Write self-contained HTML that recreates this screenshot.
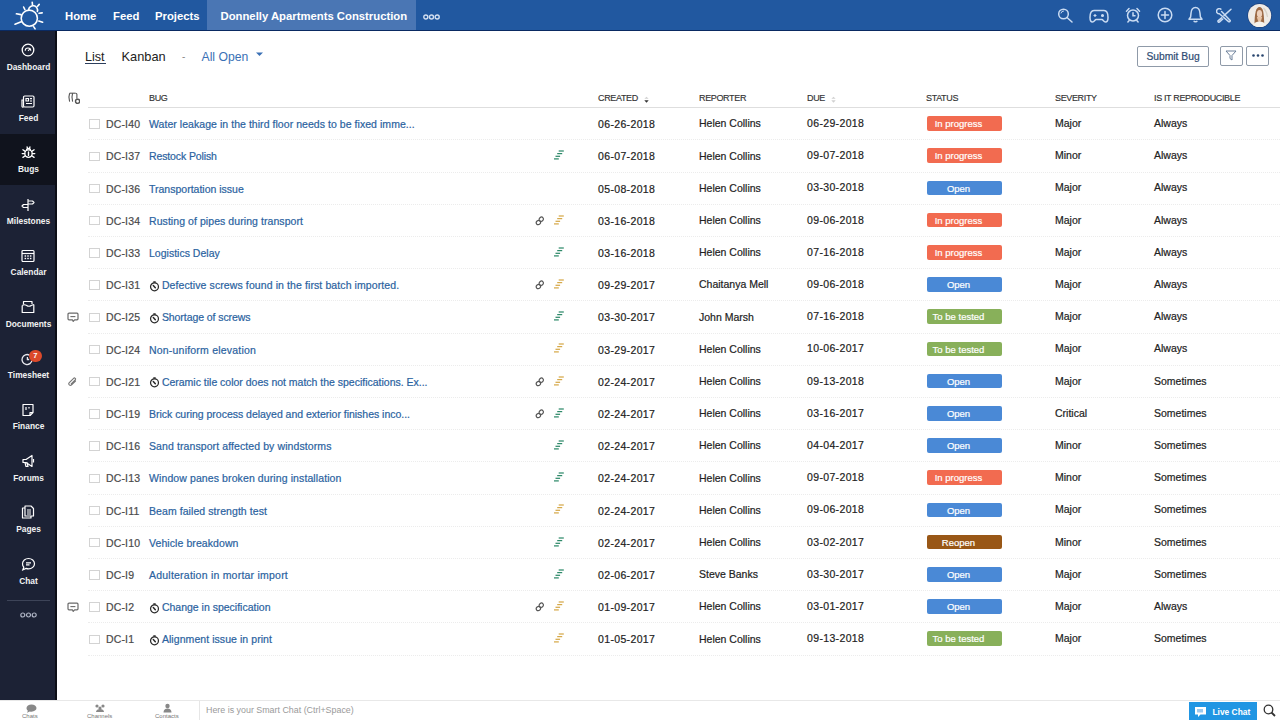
<!DOCTYPE html>
<html><head><meta charset="utf-8">
<style>
*{margin:0;padding:0;box-sizing:border-box}
html,body{width:1280px;height:720px;overflow:hidden;background:#fff;font-family:"Liberation Sans",sans-serif;color:#222}
.abs{position:absolute}
#top{position:absolute;left:0;top:0;width:1280px;height:31px;background:#2158a0;border-bottom:1.3px solid #0a2a62}
#top .nav{position:absolute;top:1px;height:30px;line-height:31px;font-size:11.3px;font-weight:bold;color:#fff;white-space:nowrap}
#acttab{position:absolute;left:207px;top:0;width:209px;height:30px;background:#4a76b4}
#side{position:absolute;left:0;top:31px;width:57px;height:669px;background:#1c2235;border-right:2px solid #0c0e16}
.si{position:absolute;left:0;width:55px;height:51.5px}
.si.act{background:#10131d;height:51px}
.si .lbl{position:absolute;left:0;width:57px;text-align:center;top:30.5px;font-size:8.4px;font-weight:bold;color:#f2f2f2;line-height:10px;white-space:nowrap}
.si svg{position:absolute;left:20px;top:10px}
#bottom{position:absolute;left:0;top:700px;width:1280px;height:20px;background:#fff;border-top:1px solid #e8e8e8}
.row{position:absolute;left:88px;width:1192px;height:32.25px;border-bottom:1px dotted #ececec}
.row > div{position:absolute;top:1px;height:31px;line-height:31px;white-space:nowrap;font-size:10.5px;-webkit-text-stroke:0.2px currentColor}
.cb{left:1.2px!important;top:11.2px!important;width:11px;height:9.5px!important;border:1px solid #d3d3d3;background:#fff}
.id{left:18px;color:#4a4a4a;letter-spacing:0.15px}
.ttl{left:61px;color:#2a62a0}
.ttl.t2{left:73.9px}
.row > .clkw{left:60.9px;top:10.6px;height:12px;line-height:0}
.lnkw{left:447px}
.lnkw svg{position:relative;top:1px}
.row > .priw{left:465px;top:9.8px;height:10px;line-height:0}
.c{color:#222}
.cr{left:510px;letter-spacing:0.35px}
.row > .rep{left:611px;top:0.2px}
.row > .due{left:719px;letter-spacing:0.35px;top:-0.2px}
.badge{left:839px!important;top:8px!important;width:75px;height:14.5px!important;line-height:16px!important;border-radius:2px;color:#fff;font-size:9.5px!important;-webkit-text-stroke:0.2px #fff;text-align:center;padding-right:12px}
.row > .sev{left:967px;top:-0.2px}
.row > .repro{left:1066px;top:-0.2px}
.lefti{left:-21px!important}
.lefti svg{position:relative;top:2px}
.th{position:absolute;top:92px;font-size:9px;color:#333;-webkit-text-stroke:0.15px #333;letter-spacing:-0.35px;line-height:12px;white-space:nowrap}
</style></head>
<body>
<div id="top">
  <svg class="abs" style="left:0px;top:0px" width="50" height="31" viewBox="0 0 50 31">
    <g fill="none" stroke="#fff" stroke-width="1.6" stroke-linecap="round">
      <circle cx="29.3" cy="18.2" r="8.1"/>
      <path d="M28.6 9.6A4.5 4.5 0 1 1 37.4 11.4"/>
      <path d="M32.2 2.2l.3 2.6M39.2 4.4l-1.6 1.8M23.6 7l1.3 2.6M16.4 13.8l4.5 0.8M42.2 12.9l-3.1 0.4M15 24.2l6.2-2.4M42.6 22.2l-3.8-1.2M35.1 28.9l-1.3-2.1"/>
    </g>
  </svg>
  <div id="acttab"></div>
  <div class="nav" style="left:65px">Home</div>
  <div class="nav" style="left:113px">Feed</div>
  <div class="nav" style="left:155px">Projects</div>
  <div class="nav" style="left:220.5px">Donnelly Apartments Construction</div>
  <svg class="abs" style="left:423px;top:14.2px" width="17" height="6" viewBox="0 0 17 6"><g fill="none" stroke="#d2def0" stroke-width="1.4"><circle cx="2.8" cy="3" r="2"/><circle cx="8.5" cy="3" r="2"/><circle cx="14.2" cy="3" r="2"/></g></svg>
  <!-- right icons -->
  <svg class="abs" style="left:1057px;top:8px" width="17" height="15" viewBox="0 0 17 15"><g fill="none" stroke="#c9dbf2" stroke-width="1.5" stroke-linecap="round"><circle cx="6.5" cy="6" r="4.8"/><path d="M10 9.5l5 4.5"/><path d="M4 5a2.5 2.5 0 0 1 2.5-2" stroke-width="1"/></g></svg>
  <svg class="abs" style="left:1089px;top:9px" width="20" height="14" viewBox="0 0 20 14"><g fill="none" stroke="#c9dbf2" stroke-width="1.5" stroke-linejoin="round"><path d="M5 1.5h10c2.5 0 4 3 4 7 0 3-1 4.5-2.5 4.5-1.8 0-2.5-2.5-3.5-2.5H7c-1 0-1.7 2.5-3.5 2.5C2 13 1 11.5 1 8.5c0-4 1.5-7 4-7z"/><path d="M4.5 6.5h3M6 5v3" stroke-width="1.2"/><circle cx="13.5" cy="6.5" r="0.8" fill="#c9dbf2"/></g></svg>
  <svg class="abs" style="left:1125px;top:7px" width="16" height="16" viewBox="0 0 16 16"><g fill="none" stroke="#c9dbf2" stroke-width="1.5" stroke-linecap="round"><circle cx="8" cy="8.5" r="5.5"/><path d="M8 5.8v3h2"/><path d="M1.5 4.2l2.5-2.6M14.5 4.2L12 1.6M4.2 13.5l-1.3 1.5M11.8 13.5l1.3 1.5"/></g></svg>
  <svg class="abs" style="left:1157px;top:7px" width="16" height="16" viewBox="0 0 16 16"><g fill="none" stroke="#c9dbf2" stroke-width="1.5" stroke-linecap="round"><circle cx="8" cy="8" r="6.8"/><path d="M8 4.5v7M4.5 8h7"/></g></svg>
  <svg class="abs" style="left:1188px;top:6px" width="15" height="17" viewBox="0 0 15 17"><g fill="none" stroke="#c9dbf2" stroke-width="1.5" stroke-linejoin="round"><path d="M7.5 1.5c-3 0-4.3 2.8-4.5 5.8L2.6 11 1 13.2h13L12.4 11 12 7.3C11.8 4.3 10.5 1.5 7.5 1.5z"/><path d="M5.8 14.8a1.8 1.6 0 0 0 3.4 0"/></g></svg>
  <svg class="abs" style="left:1216px;top:8px" width="17" height="15" viewBox="0 0 17 15"><g fill="none" stroke="#c9dbf2" stroke-width="1.5" stroke-linecap="round" stroke-linejoin="round"><path d="M4.8 1.2A2.6 2.6 0 1 0 3.4 5.8L12.6 13.6a1 1 0 0 0 1.4-1.4L5.6 3.6"/><path d="M15 1.2L8 7.6"/><path d="M5.6 9.8L2 12.8a1 1 0 0 0 1.3 1.3L6.8 11"/></g></svg>
  <svg class="abs" style="left:1247px;top:3px" width="25" height="25" viewBox="0 0 25 25">
    <defs><clipPath id="av"><circle cx="12.6" cy="12.5" r="11.6"/></clipPath></defs>
    <circle cx="12.6" cy="12.5" r="12.2" fill="#1d3f78"/>
    <circle cx="12.6" cy="12.5" r="11.6" fill="#efebe6"/>
    <g clip-path="url(#av)">
      <path d="M7.5 22c0-5 .3-10 1.2-13.5.8-3 2-4.5 3.8-4.5s3 1.5 3.7 4.5c.7 3.5 1 8.5 1 13.5z" fill="#9c6a45"/>
      <ellipse cx="12.5" cy="10.8" rx="2.6" ry="3.8" fill="#edd0bb"/><path d="M9.8 14c.8 3 1.6 5 2.7 5s1.9-2 2.7-5z" fill="#e7c4a6"/>
      <path d="M5 25c.5-4 3.5-6.5 7.5-6.5s7 2.5 7.5 6.5z" fill="#f5f2ec"/>
      <path d="M16.5 5c2 2 3.5 5 4 9" stroke="#d8d2c8" stroke-width="1.2" fill="none"/>
    </g>
  </svg>
</div>

<div id="side">
  <div class="si" style="top:0.0px">
    <svg style="left:21px;top:11.8px" width="14" height="14" viewBox="0 0 14 14"><g fill="none" stroke="#fff" stroke-width="1.3"><circle cx="7" cy="7" r="5.8"/><path d="M4.2 7.8a2.8 2.8 0 0 1 5.6 0" stroke-width="1.1"/><path d="M7 7.8l2.2-2.2" stroke-width="1.1"/></g></svg>
    <div class="lbl">Dashboard</div>
  </div>
  <div class="si" style="top:51.4px">
    <svg style="left:21px;top:12.8px" width="14" height="13" viewBox="0 0 14 13"><g fill="none" stroke="#fff" stroke-width="1.2"><rect x="2.5" y="1" width="10.5" height="11" rx="1.2"/><path d="M2.5 5H1v6a1 1 0 0 0 1.5 1"/><path d="M5 3.5h2.5v2.5H5zM9 3.6h2M9 6h2M5 8.5h6"/></g></svg>
    <div class="lbl">Feed</div>
  </div>
  <div class="si act" style="top:102.8px">
    <svg style="left:21px;top:11.8px" width="15" height="14" viewBox="0 0 15 14"><g fill="none" stroke="#fff" stroke-width="1.3" stroke-linecap="round"><circle cx="7.5" cy="7.6" r="3.7"/><path d="M5.6 3.6a2 1.6 0 0 1 3.8 0"/><path d="M6.1 1l.5 1.8M8.9 1l-.5 1.8M1.2 7.6h2.5M11.3 7.6h2.5M1.9 3.8l2.4 1.6M13.1 3.8l-2.4 1.6M1.9 11.4l2.4-1.6M13.1 11.4l-2.4-1.6"/><path d="M7.5 6v3.4" stroke-width="1.4"/></g></svg>
    <div class="lbl">Bugs</div>
  </div>
  <div class="si" style="top:154.2px">
    <svg style="left:21px;top:12.8px" width="14" height="14" viewBox="0 0 14 14"><g fill="none" stroke="#fff" stroke-width="1.2" stroke-linejoin="round"><path d="M7 1v12"/><path d="M7 3h4.5l1.5 1.5L11.5 6H7"/><path d="M7 6.5H2.5L1 8l1.5 1.5H7"/></g></svg>
    <div class="lbl">Milestones</div>
  </div>
  <div class="si" style="top:205.6px">
    <svg style="left:21px;top:12.8px" width="14" height="14" viewBox="0 0 14 14"><g fill="none" stroke="#fff" stroke-width="1.2"><rect x="1" y="1.5" width="12" height="11" rx="1"/><path d="M1 4.5h12"/></g><g fill="#fff"><rect x="3.6" y="6.3" width="1.5" height="1.4"/><rect x="6.25" y="6.3" width="1.5" height="1.4"/><rect x="8.9" y="6.3" width="1.5" height="1.4"/><rect x="3.6" y="8.8" width="1.5" height="1.4"/><rect x="6.25" y="8.8" width="1.5" height="1.4"/><rect x="8.9" y="8.8" width="1.5" height="1.4"/></g></svg>
    <div class="lbl">Calendar</div>
  </div>
  <div class="si" style="top:257.0px">
    <svg style="left:21px;top:11.8px" width="14" height="14" viewBox="0 0 14 14"><g fill="none" stroke="#fff" stroke-width="1.2" stroke-linejoin="round"><path d="M1.2 5.5v7h11.6V4.5"/><path d="M1.2 5.5c1.5-1 3-1 4.5 0s3 1 4.5 0l2.6-1"/><path d="M2.5 4.6V1.5h8.5v2.6"/></g></svg>
    <div class="lbl">Documents</div>
  </div>
  <div class="si" style="top:308.4px">
    <svg style="left:20px;top:12.8px" width="15" height="14" viewBox="0 0 15 14"><g fill="none" stroke="#e8e8ee" stroke-width="1.3"><path d="M9.5 3.2A5 5 0 1 0 12 8"/><path d="M7.4 5v2.5h1.8"/></g></svg>
    <div class="abs" style="left:29px;top:10.5px;width:12.5px;height:12.5px;border-radius:6.25px;background:#dc4a2b;color:#fff;font-size:7.5px;line-height:12.5px;text-align:center;font-weight:bold">7</div>
    <div class="lbl">Timesheet</div>
  </div>
  <div class="si" style="top:359.8px">
    <svg style="left:21px;top:11.8px" width="14" height="14" viewBox="0 0 14 14"><g fill="none" stroke="#fff" stroke-width="1.2" stroke-linejoin="round"><path d="M2 1.5h10v8l-3 3H2z"/><path d="M9 12.5V9.5h3"/><path d="M5 4v3M8 4v1.5"/></g></svg>
    <div class="lbl">Finance</div>
  </div>
  <div class="si" style="top:411.2px">
    <svg style="left:21px;top:11.8px" width="14" height="14" viewBox="0 0 14 14"><g fill="none" stroke="#fff" stroke-width="1.2" stroke-linejoin="round"><path d="M2 5.5h3l6-4v11l-6-4H2z"/><path d="M4 8.5l1 4h2l-1-4"/><path d="M12.5 5v3.5"/></g></svg>
    <div class="lbl">Forums</div>
  </div>
  <div class="si" style="top:462.6px">
    <svg style="left:21px;top:11.8px" width="14" height="14" viewBox="0 0 14 14"><g fill="none" stroke="#fff" stroke-width="1.2" stroke-linejoin="round"><path d="M4 1h6l2.5 2.5V11H4z"/><path d="M4 3H1.5v10H10v-2"/><path d="M6 5h4M6 7h4M6 9h4" stroke-width="1"/></g></svg>
    <div class="lbl">Pages</div>
  </div>
  <div class="si" style="top:514.0px">
    <svg style="left:20.5px;top:11.8px" width="15" height="14" viewBox="0 0 15 14"><g fill="none" stroke="#fff" stroke-width="1.2"><path d="M7.5 1.5c3.3 0 6 2.3 6 5.2s-2.7 5.2-6 5.2c-.9 0-1.7-.2-2.5-.5L1.8 12.8l1-2.6C1.9 9.3 1.5 8 1.5 6.7 1.5 3.8 4.2 1.5 7.5 1.5z"/><path d="M5 5.8h5M5 7.8h3.5"/></g></svg>
    <div class="lbl">Chat</div>
  </div>
  <div class="abs" style="left:7px;top:569px;width:43px;height:1px;background:#3d4458"></div>
  <svg class="abs" style="left:20px;top:581px" width="17" height="6" viewBox="0 0 17 6"><g fill="none" stroke="#aeb4c4" stroke-width="1.2"><circle cx="2.8" cy="3" r="2"/><circle cx="8.5" cy="3" r="2"/><circle cx="14.2" cy="3" r="2"/></g></svg>
</div>

<!-- content header -->
<div class="abs" style="left:85px;top:48.7px;font-size:12.6px;color:#222;line-height:16px">List</div>
<div class="abs" style="left:85px;top:63px;width:21px;height:1.3px;background:#2c3e5c"></div>
<div class="abs" style="left:121.5px;top:48.7px;font-size:12.8px;color:#222;line-height:16px">Kanban</div>
<div class="abs" style="left:182px;top:48.7px;font-size:10px;color:#888;line-height:16px">-</div>
<div class="abs" style="left:201.5px;top:48.7px;font-size:12.2px;color:#3a70b5;line-height:16px">All Open</div>
<svg class="abs" style="left:256px;top:52px" width="7" height="5" viewBox="0 0 7 5"><path d="M0 0.5h7L3.5 4z" fill="#3a70b5"/></svg>

<div class="abs" style="left:1137px;top:46px;width:72px;height:21px;border:1.3px solid #8f9aa8;border-radius:2px;font-size:10.3px;color:#2e4b73;-webkit-text-stroke:0.2px #2e4b73;text-align:center;line-height:19px">Submit Bug</div>
<div class="abs" style="left:1220px;top:46px;width:23px;height:19.5px;border:1.3px solid #8f9aa8;border-radius:2px"></div>
<svg class="abs" style="left:1225px;top:50px" width="12" height="11" viewBox="0 0 12 11"><path d="M1 1h10L7 5.5V10L5 8.5V5.5z" fill="none" stroke="#6b7f99" stroke-width="1"/></svg>
<div class="abs" style="left:1246px;top:46px;width:23px;height:19.5px;border:1.3px solid #8f9aa8;border-radius:2px"></div>
<svg class="abs" style="left:1252px;top:54px" width="12" height="3" viewBox="0 0 12 3"><g fill="#28456e"><circle cx="1.5" cy="1.5" r="1.3"/><circle cx="6" cy="1.5" r="1.3"/><circle cx="10.5" cy="1.5" r="1.3"/></g></svg>

<!-- table header -->
<svg class="abs" style="left:67px;top:92px" width="13" height="13" viewBox="0 0 13 13"><g fill="none" stroke="#555" stroke-width="1.1"><path d="M2.6 1.2Q1.2 5 2.6 9.6"/><path d="M5.6 1.2Q4.3 5 5.6 9.6"/><path d="M8.5 1.2q1.4 0 1.4 1v4.6"/><path d="M2.6 1.2h5.9"/></g><circle cx="10.6" cy="9.3" r="2.1" fill="#fff" stroke="#555" stroke-width="1.4"/></svg>
<div class="th" style="left:149px">BUG</div>
<div class="th" style="left:598px">CREATED</div>
<svg class="abs" style="left:643.5px;top:95.5px" width="5" height="8" viewBox="0 0 5 8"><path d="M0.4 2.8L2.5 0.8l2.1 2z" fill="#d0d0d0"/><path d="M0.3 4.2h4.4L2.5 6.8z" fill="#333"/></svg>
<div class="th" style="left:699px">REPORTER</div>
<div class="th" style="left:807px">DUE</div>
<svg class="abs" style="left:830.5px;top:95.5px" width="5" height="8" viewBox="0 0 5 8"><path d="M0.4 2.8L2.5 0.8l2.1 2z" fill="#d0d0d0"/><path d="M0.3 4.2h4.4L2.5 6.8z" fill="#d0d0d0"/></svg>
<div class="th" style="left:926px">STATUS</div>
<div class="th" style="left:1055px">SEVERITY</div>
<div class="th" style="left:1154px">IS IT REPRODUCIBLE</div>
<div class="abs" style="left:88px;top:106.5px;width:1192px;height:1.5px;background:#dedede"></div>

<div class="row" style="top:108.20px"><div class="cb"></div><div class="id">DC-I40</div><div class="ttl" style="letter-spacing:0.050px"><span>Water leakage in the third floor needs to be fixed imme...</span></div><div class="c cr">06-26-2018</div><div class="c rep">Helen Collins</div><div class="c due">06-29-2018</div><div class="badge" style="background:#f26b50"><span>In progress</span></div><div class="c sev">Major</div><div class="c repro">Always</div></div>
<div class="row" style="top:140.40px"><div class="cb"></div><div class="id">DC-I37</div><div class="ttl" style="letter-spacing:-0.121px"><span>Restock Polish</span></div><div class="priw"><svg width="12" height="10" viewBox="0 0 12 10"><g stroke="#2f8a6a" stroke-width="1.25"><path d="M5.7 1h5.1"/><path d="M4.2 3.6h5"/><path d="M2.5 6.3h4.6"/><path d="M1 8.9h4.8"/></g></svg></div><div class="c cr">06-07-2018</div><div class="c rep">Helen Collins</div><div class="c due">09-07-2018</div><div class="badge" style="background:#f26b50"><span>In progress</span></div><div class="c sev">Minor</div><div class="c repro">Always</div></div>
<div class="row" style="top:172.60px"><div class="cb"></div><div class="id">DC-I36</div><div class="ttl" style="letter-spacing:0.000px"><span>Transportation issue</span></div><div class="c cr">05-08-2018</div><div class="c rep">Helen Collins</div><div class="c due">03-30-2018</div><div class="badge" style="background:#4a89d6"><span>Open</span></div><div class="c sev">Major</div><div class="c repro">Always</div></div>
<div class="row" style="top:204.80px"><div class="cb"></div><div class="id">DC-I34</div><div class="ttl" style="letter-spacing:0.068px"><span>Rusting of pipes during transport</span></div><div class="lnkw"><svg class="lnk" width="10" height="10" viewBox="0 0 10 10"><g fill="none" stroke="#555" stroke-width="1.2"><ellipse cx="6.3" cy="3.2" rx="2.2" ry="2" transform="rotate(-40 6.3 3.2)"/><ellipse cx="3.4" cy="6.6" rx="2.2" ry="2" transform="rotate(-40 3.4 6.6)"/></g></svg></div><div class="priw"><svg width="12" height="10" viewBox="0 0 12 10"><g stroke="#d6a94a" stroke-width="1.25"><path d="M5.7 1h5.1"/><path d="M4.2 3.6h5"/><path d="M2.5 6.3h4.6"/><path d="M1 8.9h4.8"/></g></svg></div><div class="c cr">03-16-2018</div><div class="c rep">Helen Collins</div><div class="c due">09-06-2018</div><div class="badge" style="background:#f26b50"><span>In progress</span></div><div class="c sev">Major</div><div class="c repro">Always</div></div>
<div class="row" style="top:237.00px"><div class="cb"></div><div class="id">DC-I33</div><div class="ttl" style="letter-spacing:0.008px"><span>Logistics Delay</span></div><div class="priw"><svg width="12" height="10" viewBox="0 0 12 10"><g stroke="#2f8a6a" stroke-width="1.25"><path d="M5.7 1h5.1"/><path d="M4.2 3.6h5"/><path d="M2.5 6.3h4.6"/><path d="M1 8.9h4.8"/></g></svg></div><div class="c cr">03-16-2018</div><div class="c rep">Helen Collins</div><div class="c due">07-16-2018</div><div class="badge" style="background:#f26b50"><span>In progress</span></div><div class="c sev">Major</div><div class="c repro">Always</div></div>
<div class="row" style="top:269.20px"><div class="cb"></div><div class="id">DC-I31</div><div class="clkw"><svg width="11" height="12" viewBox="0 0 11 12"><g fill="none" stroke="#2a2a2a" stroke-width="1.25"><circle cx="5.5" cy="6.8" r="3.95"/></g><rect x="4.2" y="1.3" width="2.6" height="1.4" rx="0.5" fill="#2a2a2a"/><path d="M4.3 5.5L6.3 7.7" stroke="#2a2a2a" stroke-width="1.5" stroke-linecap="round"/></svg></div><div class="ttl t2" style="letter-spacing:0.100px"><span>Defective screws found in the first batch imported.</span></div><div class="lnkw"><svg class="lnk" width="10" height="10" viewBox="0 0 10 10"><g fill="none" stroke="#555" stroke-width="1.2"><ellipse cx="6.3" cy="3.2" rx="2.2" ry="2" transform="rotate(-40 6.3 3.2)"/><ellipse cx="3.4" cy="6.6" rx="2.2" ry="2" transform="rotate(-40 3.4 6.6)"/></g></svg></div><div class="priw"><svg width="12" height="10" viewBox="0 0 12 10"><g stroke="#d6a94a" stroke-width="1.25"><path d="M5.7 1h5.1"/><path d="M4.2 3.6h5"/><path d="M2.5 6.3h4.6"/><path d="M1 8.9h4.8"/></g></svg></div><div class="c cr">09-29-2017</div><div class="c rep">Chaitanya Mell</div><div class="c due">09-06-2018</div><div class="badge" style="background:#4a89d6"><span>Open</span></div><div class="c sev">Major</div><div class="c repro">Always</div></div>
<div class="row" style="top:301.40px"><div class="lefti"><svg width="12" height="11" viewBox="0 0 12 11"><g fill="none" stroke="#6a6a6a" stroke-width="1.2" stroke-linejoin="round"><path d="M2 1.2h8a1 1 0 0 1 1 1v4.6a1 1 0 0 1-1 1H7.6L6.2 9.4 5.4 7.8H2a1 1 0 0 1-1-1V2.2a1 1 0 0 1 1-1z"/><path d="M3.4 4.6h5" stroke-width="1.1"/></g></svg></div><div class="cb"></div><div class="id">DC-I25</div><div class="clkw"><svg width="11" height="12" viewBox="0 0 11 12"><g fill="none" stroke="#2a2a2a" stroke-width="1.25"><circle cx="5.5" cy="6.8" r="3.95"/></g><rect x="4.2" y="1.3" width="2.6" height="1.4" rx="0.5" fill="#2a2a2a"/><path d="M4.3 5.5L6.3 7.7" stroke="#2a2a2a" stroke-width="1.5" stroke-linecap="round"/></svg></div><div class="ttl t2" style="letter-spacing:-0.071px"><span>Shortage of screws</span></div><div class="priw"><svg width="12" height="10" viewBox="0 0 12 10"><g stroke="#2f8a6a" stroke-width="1.25"><path d="M5.7 1h5.1"/><path d="M4.2 3.6h5"/><path d="M2.5 6.3h4.6"/><path d="M1 8.9h4.8"/></g></svg></div><div class="c cr">03-30-2017</div><div class="c rep">John Marsh</div><div class="c due">07-16-2018</div><div class="badge" style="background:#88b05a"><span>To be tested</span></div><div class="c sev">Major</div><div class="c repro">Always</div></div>
<div class="row" style="top:333.60px"><div class="cb"></div><div class="id">DC-I24</div><div class="ttl" style="letter-spacing:0.204px"><span>Non-uniform elevation</span></div><div class="priw"><svg width="12" height="10" viewBox="0 0 12 10"><g stroke="#d6a94a" stroke-width="1.25"><path d="M5.7 1h5.1"/><path d="M4.2 3.6h5"/><path d="M2.5 6.3h4.6"/><path d="M1 8.9h4.8"/></g></svg></div><div class="c cr">03-29-2017</div><div class="c rep">Helen Collins</div><div class="c due">10-06-2017</div><div class="badge" style="background:#88b05a"><span>To be tested</span></div><div class="c sev">Major</div><div class="c repro">Always</div></div>
<div class="row" style="top:365.80px"><div class="lefti"><svg width="11" height="11" viewBox="0 0 11 11"><path d="M8.5 4L4.6 7.9a1.6 1.6 0 0 1-2.3-2.3L6.6 1.3a1.1 1.1 0 0 1 1.6 1.6L4.2 6.9" fill="none" stroke="#777" stroke-width="1.1" stroke-linecap="round"/></svg></div><div class="cb"></div><div class="id">DC-I21</div><div class="clkw"><svg width="11" height="12" viewBox="0 0 11 12"><g fill="none" stroke="#2a2a2a" stroke-width="1.25"><circle cx="5.5" cy="6.8" r="3.95"/></g><rect x="4.2" y="1.3" width="2.6" height="1.4" rx="0.5" fill="#2a2a2a"/><path d="M4.3 5.5L6.3 7.7" stroke="#2a2a2a" stroke-width="1.5" stroke-linecap="round"/></svg></div><div class="ttl t2" style="letter-spacing:-0.009px"><span>Ceramic tile color does not match the specifications. Ex...</span></div><div class="lnkw"><svg class="lnk" width="10" height="10" viewBox="0 0 10 10"><g fill="none" stroke="#555" stroke-width="1.2"><ellipse cx="6.3" cy="3.2" rx="2.2" ry="2" transform="rotate(-40 6.3 3.2)"/><ellipse cx="3.4" cy="6.6" rx="2.2" ry="2" transform="rotate(-40 3.4 6.6)"/></g></svg></div><div class="priw"><svg width="12" height="10" viewBox="0 0 12 10"><g stroke="#d6a94a" stroke-width="1.25"><path d="M5.7 1h5.1"/><path d="M4.2 3.6h5"/><path d="M2.5 6.3h4.6"/><path d="M1 8.9h4.8"/></g></svg></div><div class="c cr">02-24-2017</div><div class="c rep">Helen Collins</div><div class="c due">09-13-2018</div><div class="badge" style="background:#4a89d6"><span>Open</span></div><div class="c sev">Major</div><div class="c repro">Sometimes</div></div>
<div class="row" style="top:398.00px"><div class="cb"></div><div class="id">DC-I19</div><div class="ttl" style="letter-spacing:-0.018px"><span>Brick curing process delayed and exterior finishes inco...</span></div><div class="lnkw"><svg class="lnk" width="10" height="10" viewBox="0 0 10 10"><g fill="none" stroke="#555" stroke-width="1.2"><ellipse cx="6.3" cy="3.2" rx="2.2" ry="2" transform="rotate(-40 6.3 3.2)"/><ellipse cx="3.4" cy="6.6" rx="2.2" ry="2" transform="rotate(-40 3.4 6.6)"/></g></svg></div><div class="priw"><svg width="12" height="10" viewBox="0 0 12 10"><g stroke="#2f8a6a" stroke-width="1.25"><path d="M5.7 1h5.1"/><path d="M4.2 3.6h5"/><path d="M2.5 6.3h4.6"/><path d="M1 8.9h4.8"/></g></svg></div><div class="c cr">02-24-2017</div><div class="c rep">Helen Collins</div><div class="c due">03-16-2017</div><div class="badge" style="background:#4a89d6"><span>Open</span></div><div class="c sev">Critical</div><div class="c repro">Sometimes</div></div>
<div class="row" style="top:430.20px"><div class="cb"></div><div class="id">DC-I16</div><div class="ttl" style="letter-spacing:0.095px"><span>Sand transport affected by windstorms</span></div><div class="priw"><svg width="12" height="10" viewBox="0 0 12 10"><g stroke="#2f8a6a" stroke-width="1.25"><path d="M5.7 1h5.1"/><path d="M4.2 3.6h5"/><path d="M2.5 6.3h4.6"/><path d="M1 8.9h4.8"/></g></svg></div><div class="c cr">02-24-2017</div><div class="c rep">Helen Collins</div><div class="c due">04-04-2017</div><div class="badge" style="background:#4a89d6"><span>Open</span></div><div class="c sev">Minor</div><div class="c repro">Sometimes</div></div>
<div class="row" style="top:462.40px"><div class="cb"></div><div class="id">DC-I13</div><div class="ttl" style="letter-spacing:0.102px"><span>Window panes broken during installation</span></div><div class="priw"><svg width="12" height="10" viewBox="0 0 12 10"><g stroke="#2f8a6a" stroke-width="1.25"><path d="M5.7 1h5.1"/><path d="M4.2 3.6h5"/><path d="M2.5 6.3h4.6"/><path d="M1 8.9h4.8"/></g></svg></div><div class="c cr">02-24-2017</div><div class="c rep">Helen Collins</div><div class="c due">09-07-2018</div><div class="badge" style="background:#f26b50"><span>In progress</span></div><div class="c sev">Minor</div><div class="c repro">Sometimes</div></div>
<div class="row" style="top:494.60px"><div class="cb"></div><div class="id">DC-I11</div><div class="ttl" style="letter-spacing:0.074px"><span>Beam failed strength test</span></div><div class="priw"><svg width="12" height="10" viewBox="0 0 12 10"><g stroke="#d6a94a" stroke-width="1.25"><path d="M5.7 1h5.1"/><path d="M4.2 3.6h5"/><path d="M2.5 6.3h4.6"/><path d="M1 8.9h4.8"/></g></svg></div><div class="c cr">02-24-2017</div><div class="c rep">Helen Collins</div><div class="c due">09-06-2018</div><div class="badge" style="background:#4a89d6"><span>Open</span></div><div class="c sev">Major</div><div class="c repro">Sometimes</div></div>
<div class="row" style="top:526.80px"><div class="cb"></div><div class="id">DC-I10</div><div class="ttl" style="letter-spacing:0.079px"><span>Vehicle breakdown</span></div><div class="priw"><svg width="12" height="10" viewBox="0 0 12 10"><g stroke="#2f8a6a" stroke-width="1.25"><path d="M5.7 1h5.1"/><path d="M4.2 3.6h5"/><path d="M2.5 6.3h4.6"/><path d="M1 8.9h4.8"/></g></svg></div><div class="c cr">02-24-2017</div><div class="c rep">Helen Collins</div><div class="c due">03-02-2017</div><div class="badge" style="background:#995716"><span>Reopen</span></div><div class="c sev">Minor</div><div class="c repro">Sometimes</div></div>
<div class="row" style="top:559.00px"><div class="cb"></div><div class="id">DC-I9</div><div class="ttl" style="letter-spacing:0.225px"><span>Adulteration in mortar import</span></div><div class="priw"><svg width="12" height="10" viewBox="0 0 12 10"><g stroke="#2f8a6a" stroke-width="1.25"><path d="M5.7 1h5.1"/><path d="M4.2 3.6h5"/><path d="M2.5 6.3h4.6"/><path d="M1 8.9h4.8"/></g></svg></div><div class="c cr">02-06-2017</div><div class="c rep">Steve Banks</div><div class="c due">03-30-2017</div><div class="badge" style="background:#4a89d6"><span>Open</span></div><div class="c sev">Major</div><div class="c repro">Sometimes</div></div>
<div class="row" style="top:591.20px"><div class="lefti"><svg width="12" height="11" viewBox="0 0 12 11"><g fill="none" stroke="#6a6a6a" stroke-width="1.2" stroke-linejoin="round"><path d="M2 1.2h8a1 1 0 0 1 1 1v4.6a1 1 0 0 1-1 1H7.6L6.2 9.4 5.4 7.8H2a1 1 0 0 1-1-1V2.2a1 1 0 0 1 1-1z"/><path d="M3.4 4.6h5" stroke-width="1.1"/></g></svg></div><div class="cb"></div><div class="id">DC-I2</div><div class="clkw"><svg width="11" height="12" viewBox="0 0 11 12"><g fill="none" stroke="#2a2a2a" stroke-width="1.25"><circle cx="5.5" cy="6.8" r="3.95"/></g><rect x="4.2" y="1.3" width="2.6" height="1.4" rx="0.5" fill="#2a2a2a"/><path d="M4.3 5.5L6.3 7.7" stroke="#2a2a2a" stroke-width="1.5" stroke-linecap="round"/></svg></div><div class="ttl t2" style="letter-spacing:0.001px"><span>Change in specification</span></div><div class="lnkw"><svg class="lnk" width="10" height="10" viewBox="0 0 10 10"><g fill="none" stroke="#555" stroke-width="1.2"><ellipse cx="6.3" cy="3.2" rx="2.2" ry="2" transform="rotate(-40 6.3 3.2)"/><ellipse cx="3.4" cy="6.6" rx="2.2" ry="2" transform="rotate(-40 3.4 6.6)"/></g></svg></div><div class="priw"><svg width="12" height="10" viewBox="0 0 12 10"><g stroke="#d6a94a" stroke-width="1.25"><path d="M5.7 1h5.1"/><path d="M4.2 3.6h5"/><path d="M2.5 6.3h4.6"/><path d="M1 8.9h4.8"/></g></svg></div><div class="c cr">01-09-2017</div><div class="c rep">Helen Collins</div><div class="c due">03-01-2017</div><div class="badge" style="background:#4a89d6"><span>Open</span></div><div class="c sev">Major</div><div class="c repro">Always</div></div>
<div class="row" style="top:623.40px"><div class="cb"></div><div class="id">DC-I1</div><div class="clkw"><svg width="11" height="12" viewBox="0 0 11 12"><g fill="none" stroke="#2a2a2a" stroke-width="1.25"><circle cx="5.5" cy="6.8" r="3.95"/></g><rect x="4.2" y="1.3" width="2.6" height="1.4" rx="0.5" fill="#2a2a2a"/><path d="M4.3 5.5L6.3 7.7" stroke="#2a2a2a" stroke-width="1.5" stroke-linecap="round"/></svg></div><div class="ttl t2" style="letter-spacing:0.065px"><span>Alignment issue in print</span></div><div class="priw"><svg width="12" height="10" viewBox="0 0 12 10"><g stroke="#d6a94a" stroke-width="1.25"><path d="M5.7 1h5.1"/><path d="M4.2 3.6h5"/><path d="M2.5 6.3h4.6"/><path d="M1 8.9h4.8"/></g></svg></div><div class="c cr">01-05-2017</div><div class="c rep">Helen Collins</div><div class="c due">09-13-2018</div><div class="badge" style="background:#88b05a"><span>To be tested</span></div><div class="c sev">Major</div><div class="c repro">Sometimes</div></div>

<div id="bottom">
  <svg class="abs" style="left:26px;top:3px" width="11" height="9" viewBox="0 0 11 9"><path d="M5.5 .5c2.8 0 5 1.6 5 3.6S8.3 7.7 5.5 7.7c-.6 0-1.2-.1-1.7-.2L1 8.7l.9-1.9C1 6.1.5 5.2.5 4.1.5 2.1 2.7.5 5.5.5z" fill="#888"/></svg>
  <div class="abs" style="left:22px;top:12px;font-size:6px;color:#777">Chats</div>
  <svg class="abs" style="left:94px;top:2px" width="12" height="10" viewBox="0 0 12 10"><g fill="#888"><circle cx="3" cy="3" r="1.6"/><circle cx="9" cy="3" r="1.6"/><circle cx="6" cy="5" r="1.6"/><path d="M2 9c0-2 2-3 4-3s4 1 4 3z"/></g></svg>
  <div class="abs" style="left:87px;top:12px;font-size:6px;color:#777">Channels</div>
  <svg class="abs" style="left:163px;top:2px" width="9" height="10" viewBox="0 0 9 10"><g fill="#888"><circle cx="4.5" cy="3" r="2.2"/><path d="M.5 9.5c0-2.5 1.8-4 4-4s4 1.5 4 4z"/></g></svg>
  <div class="abs" style="left:155px;top:12px;font-size:6px;color:#777">Contacts</div>
  <div class="abs" style="left:199px;top:0;width:1px;height:20px;background:#e6e6e6"></div>
  <div class="abs" style="left:206px;top:3px;font-size:8.9px;color:#9a9a9a;line-height:12px;white-space:nowrap">Here is your Smart Chat (Ctrl+Space)</div>
  <div class="abs" style="left:1189px;top:1px;width:68px;height:19px;background:#2196e3"></div>
  <svg class="abs" style="left:1194px;top:5px" width="13" height="12" viewBox="0 0 13 12"><path d="M1 1h11v7.5H6.5L4 11V8.5H1z" fill="#fff"/><path d="M3 3h6v3.5H3z" fill="#9cc9ee"/></svg>
  <div class="abs" style="left:1212.5px;top:4.5px;font-size:8.4px;font-weight:bold;color:#fff;line-height:12px;white-space:nowrap">Live Chat</div>
  <svg class="abs" style="left:1263px;top:3px" width="13" height="13" viewBox="0 0 13 13"><g fill="none" stroke="#333" stroke-width="1.3"><circle cx="5.5" cy="5.5" r="4.3"/><path d="M8.5 8.5l3.5 3.5" stroke-width="1.8"/></g></svg>
</div>
</body></html>
